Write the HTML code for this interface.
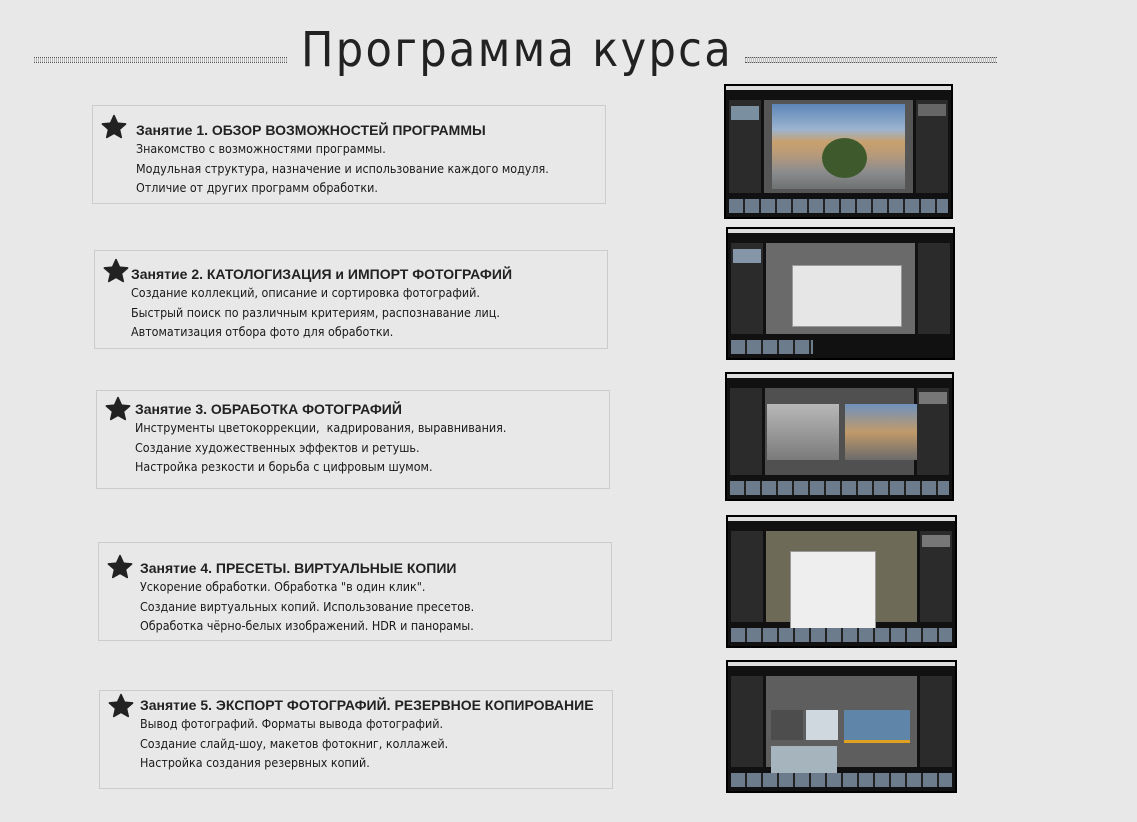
<!DOCTYPE html>
<html><head><meta charset="utf-8"><style>
body{margin:0;width:1137px;height:822px;background:#e8e8e8;position:relative;overflow:hidden;font-family:"Liberation Sans",sans-serif;color:#222}
h1{position:absolute;left:0;width:1034px;top:22px;margin:0;text-align:center;font-weight:normal;font-size:48px;letter-spacing:2.3px;font-family:"DejaVu Sans Condensed","DejaVu Sans",sans-serif;color:#222}
.ln{position:absolute;top:57px;height:4px;border-top:1px dotted #555;border-bottom:1px dotted #555;background:repeating-linear-gradient(90deg,#bbb 0 1px,#eee 1px 2px)}
.box{position:absolute;width:514px;height:99px;border:1px solid #ccc;box-sizing:border-box}
.star{position:absolute;left:8px;top:8px;width:26px;height:26px}
.t{position:absolute;font-weight:bold;font-size:14px;white-space:nowrap}
.d{position:absolute;font-family:"DejaVu Sans Condensed","DejaVu Sans",sans-serif;font-size:12.4px;line-height:19.5px;white-space:nowrap;color:#1a1a1a}
.sc{position:absolute;background:#111;border:2px solid #000;box-sizing:border-box;overflow:hidden}
.sc .top{position:absolute;left:0;right:0;top:0;height:4px;background:#ddd}
.sc .lp{position:absolute;left:3px;top:14px;width:32px;bottom:24px;background:#2b2b2b}
.sc .rp{position:absolute;right:3px;top:14px;width:32px;bottom:24px;background:#2b2b2b}
.sc .c{position:absolute;left:38px;right:38px;top:14px;bottom:24px;background:#5a5a5a}
.sc .fs{position:absolute;left:3px;right:3px;bottom:4px;height:14px;background:repeating-linear-gradient(90deg,#6d7c8c 0 14px,#222 14px 16px)}
</style></head><body>
<div class="ln" style="left:34px;width:253px"></div>
<div class="ln" style="left:745px;width:252px"></div>
<h1>Программа курса</h1>

<svg width="0" height="0" style="position:absolute"><defs><symbol id="st" viewBox="0 0 24 24"><path d="M12 1.5l3.2 7 7.5.7-5.7 5 1.7 7.4L12 17.8l-6.7 3.8L7 14.2 1.3 9.2l7.5-.7z" fill="#222" stroke="#222" stroke-width="1.5" stroke-linejoin="round"/></symbol></defs></svg>

<div class="box" style="left:92px;top:105px"><svg class="star"><use href="#st"/></svg>
<div class="t" style="left:43px;top:16px">Занятие 1. ОБЗОР ВОЗМОЖНОСТЕЙ ПРОГРАММЫ</div>
<div class="d" style="left:43px;top:33px">Знакомство с возможностями программы.<br>Модульная структура, назначение и использование каждого модуля.<br>Отличие от других программ обработки.</div></div>

<div class="box" style="left:94px;top:250px"><svg class="star" style="top:7px"><use href="#st"/></svg>
<div class="t" style="left:36px;top:15px">Занятие 2. КАТОЛОГИЗАЦИЯ и ИМПОРТ ФОТОГРАФИЙ</div>
<div class="d" style="left:36px;top:32px">Создание коллекций, описание и сортировка фотографий.<br>Быстрый поиск по различным критериям, распознавание лиц.<br>Автоматизация отбора фото для обработки.</div></div>

<div class="box" style="left:96px;top:390px"><svg class="star" style="top:5px"><use href="#st"/></svg>
<div class="t" style="left:38px;top:10px">Занятие 3. ОБРАБОТКА ФОТОГРАФИЙ</div>
<div class="d" style="left:38px;top:27px">Инструменты цветокоррекции,&nbsp; кадрирования, выравнивания.<br>Создание художественных эффектов и ретушь.<br>Настройка резкости и борьба с цифровым шумом.</div></div>

<div class="box" style="left:98px;top:542px"><svg class="star" style="top:11px"><use href="#st"/></svg>
<div class="t" style="left:41px;top:17px">Занятие 4. ПРЕСЕТЫ. ВИРТУАЛЬНЫЕ КОПИИ</div>
<div class="d" style="left:41px;top:34px">Ускорение обработки. Обработка "в один клик".<br>Создание виртуальных копий. Использование пресетов.<br>Обработка чёрно-белых изображений. HDR и панорамы.</div></div>

<div class="box" style="left:99px;top:690px"><svg class="star" style="top:2px"><use href="#st"/></svg>
<div class="t" style="left:40px;top:6px">Занятие 5. ЭКСПОРТ ФОТОГРАФИЙ. РЕЗЕРВНОЕ КОПИРОВАНИЕ</div>
<div class="d" style="left:40px;top:23px">Вывод фотографий. Форматы вывода фотографий.<br>Создание слайд-шоу, макетов фотокниг, коллажей.<br>Настройка создания резервных копий.</div></div>

<div class="sc" style="left:724px;top:84px;width:229px;height:135px"><div class="top"></div><div class="lp"><div style="margin:6px 2px;height:14px;background:#7a8fa0"></div></div><div class="rp"><div style="margin:4px 2px;height:12px;background:#666"></div></div><div class="c" style="background:#555"><div style="position:absolute;left:8px;right:8px;top:4px;bottom:4px;background:linear-gradient(#5d86b8 0,#9cb4cf 30%,#c9a06c 45%,#b79a7a 60%,#8a8c8e 80%,#6f7272 100%)"><div style="position:absolute;left:50px;top:34px;width:45px;height:40px;border-radius:50%;background:#3e5a2c"></div></div></div><div class="fs"></div></div>

<div class="sc" style="left:726px;top:227px;width:229px;height:133px"><div class="top"></div><div class="lp"><div style="margin:6px 2px;height:14px;background:#8496a8"></div></div><div class="rp"></div><div class="c" style="background:#6a6a6a"><div style="position:absolute;left:26px;top:22px;width:108px;height:60px;background:#e6e6e6;border:1px solid #999"></div></div><div class="fs" style="right:140px"></div></div>

<div class="sc" style="left:725px;top:372px;width:229px;height:129px"><div class="top"></div><div class="lp"></div><div class="rp"><div style="margin:4px 2px;height:12px;background:#777"></div></div><div class="c" style="background:#505050"><div style="position:absolute;left:2px;top:16px;width:72px;height:56px;background:linear-gradient(#b8b8b8,#9a9a9a 50%,#7a7a7a)"></div><div style="position:absolute;left:80px;top:16px;width:72px;height:56px;background:linear-gradient(#6f92bd,#c19a6a 50%,#6b6b6b)"></div></div><div class="fs"></div></div>

<div class="sc" style="left:726px;top:515px;width:231px;height:133px"><div class="top"></div><div class="lp"></div><div class="rp"><div style="margin:4px 2px;height:12px;background:#777"></div></div><div class="c" style="background:#6d6a58"><div style="position:absolute;left:24px;top:20px;width:84px;height:88px;background:#eee;border:1px solid #999"></div></div><div class="fs"></div></div>

<div class="sc" style="left:726px;top:660px;width:231px;height:133px"><div class="top"></div><div class="lp"></div><div class="rp"></div><div class="c" style="background:#5e5e5e"><div style="position:absolute;left:5px;top:34px;width:32px;height:30px;background:#4d4d4d"></div><div style="position:absolute;left:40px;top:34px;width:32px;height:30px;background:#cfd8df"></div><div style="position:absolute;left:78px;top:34px;width:66px;height:30px;background:#5f86a8;border-bottom:3px solid #e0a020"></div><div style="position:absolute;left:5px;top:70px;width:66px;height:28px;background:#a6b5bd"></div></div><div class="fs"></div></div>
</body></html>
